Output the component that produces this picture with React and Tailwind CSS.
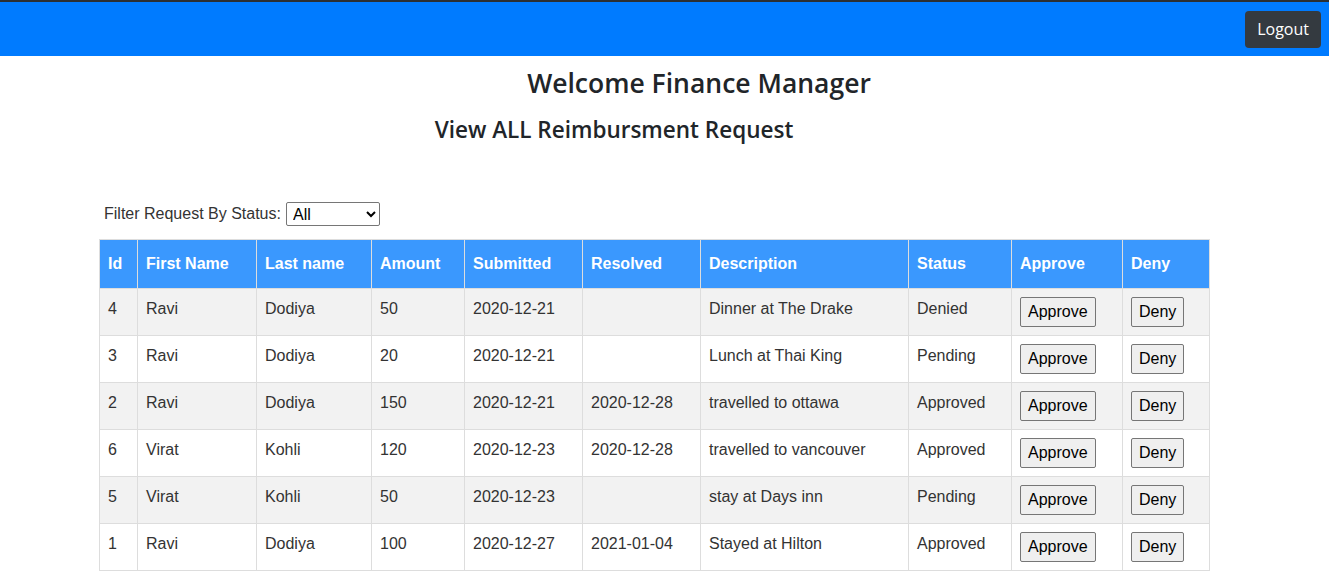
const rows = [
  { id: 4, first: 'Ravi', last: 'Dodiya', amount: 50, submitted: '2020-12-21', resolved: '', desc: 'Dinner at The Drake', status: 'Denied' },
  { id: 3, first: 'Ravi', last: 'Dodiya', amount: 20, submitted: '2020-12-21', resolved: '', desc: 'Lunch at Thai King', status: 'Pending' },
  { id: 2, first: 'Ravi', last: 'Dodiya', amount: 150, submitted: '2020-12-21', resolved: '2020-12-28', desc: 'travelled to ottawa', status: 'Approved' },
  { id: 6, first: 'Virat', last: 'Kohli', amount: 120, submitted: '2020-12-23', resolved: '2020-12-28', desc: 'travelled to vancouver', status: 'Approved' },
  { id: 5, first: 'Virat', last: 'Kohli', amount: 50, submitted: '2020-12-23', resolved: '', desc: 'stay at Days inn', status: 'Pending' },
  { id: 1, first: 'Ravi', last: 'Dodiya', amount: 100, submitted: '2020-12-27', resolved: '2021-01-04', desc: 'Stayed at Hilton', status: 'Approved' },
];

const cols = [
  { label: 'Id', w: 'w-[38px]' },
  { label: 'First Name', w: 'w-[119px]' },
  { label: 'Last name', w: 'w-[115px]' },
  { label: 'Amount', w: 'w-[93px]' },
  { label: 'Submitted', w: 'w-[118px]' },
  { label: 'Resolved', w: 'w-[118px]' },
  { label: 'Description', w: 'w-[208px]' },
  { label: 'Status', w: 'w-[103px]' },
  { label: 'Approve', w: 'w-[111px]' },
  { label: 'Deny', w: 'w-[87px]' },
];

function NativeButton({ children }) {
  return (
    <button className="h-[30px] rounded-[2px] border border-[#767676] bg-[#efefef] px-[7px] text-[16px] leading-none text-black">
      {children}
    </button>
  );
}

export default function App() {
  const td = 'border border-[#dddddd] px-2 py-2 align-top leading-6';
  return (
    <div className="min-h-screen bg-white font-['Liberation_Sans',Arial,sans-serif] text-[#212529]">
      <nav className="flex h-14 items-center justify-end border-t-2 border-[#2b2f33] bg-[#007bff] pr-2">
        <button className="h-[37px] rounded-[4px] bg-[#343a40] px-3 font-['Open_Sans',sans-serif] text-[16px] text-white">
          Logout
        </button>
      </nav>

      <h3 className="mt-[10px] pl-[69px] text-center font-['Open_Sans',sans-serif] text-[26.5px] font-semibold leading-[34px]">
        Welcome Finance Manager
      </h3>
      <h4 className="mt-[15px] pr-[101px] text-center font-['Open_Sans',sans-serif] text-[22.5px] font-semibold leading-[29px]">
        View ALL Reimbursment Request
      </h4>

      <div className="mt-[58px] ml-[99px] w-[1110px]">
        <div className="flex items-center pl-[5px] text-[16px] text-[#333]">
          <span>Filter Request By Status:</span>
          <select className="ml-[5px] h-[24px] w-[94px] rounded-[2px] border border-[#767676] bg-white px-[2px] text-[16px] text-black">
            <option>All</option>
            <option>Pending</option>
            <option>Approved</option>
            <option>Denied</option>
          </select>
        </div>

        <table className="mt-[13px] w-[1110px] table-fixed border-collapse text-[16px] text-[#333]">
          <thead>
            <tr>
              {cols.map((c) => (
                <th
                  key={c.label}
                  className={`${c.w} border border-[#dddddd] bg-[#3a98fe] px-2 py-3 text-left font-bold leading-6 text-white`}
                >
                  {c.label}
                </th>
              ))}
            </tr>
          </thead>
          <tbody>
            {rows.map((r, i) => (
              <tr key={r.id} className={i % 2 === 0 ? 'bg-[#f2f2f2]' : 'bg-white'}>
                <td className={td}>{r.id}</td>
                <td className={td}>{r.first}</td>
                <td className={td}>{r.last}</td>
                <td className={td}>{r.amount}</td>
                <td className={td}>{r.submitted}</td>
                <td className={td}>{r.resolved}</td>
                <td className={td}>{r.desc}</td>
                <td className={td}>{r.status}</td>
                <td className={td}>
                  <NativeButton>Approve</NativeButton>
                </td>
                <td className={td}>
                  <NativeButton>Deny</NativeButton>
                </td>
              </tr>
            ))}
          </tbody>
        </table>
      </div>
    </div>
  );
}
